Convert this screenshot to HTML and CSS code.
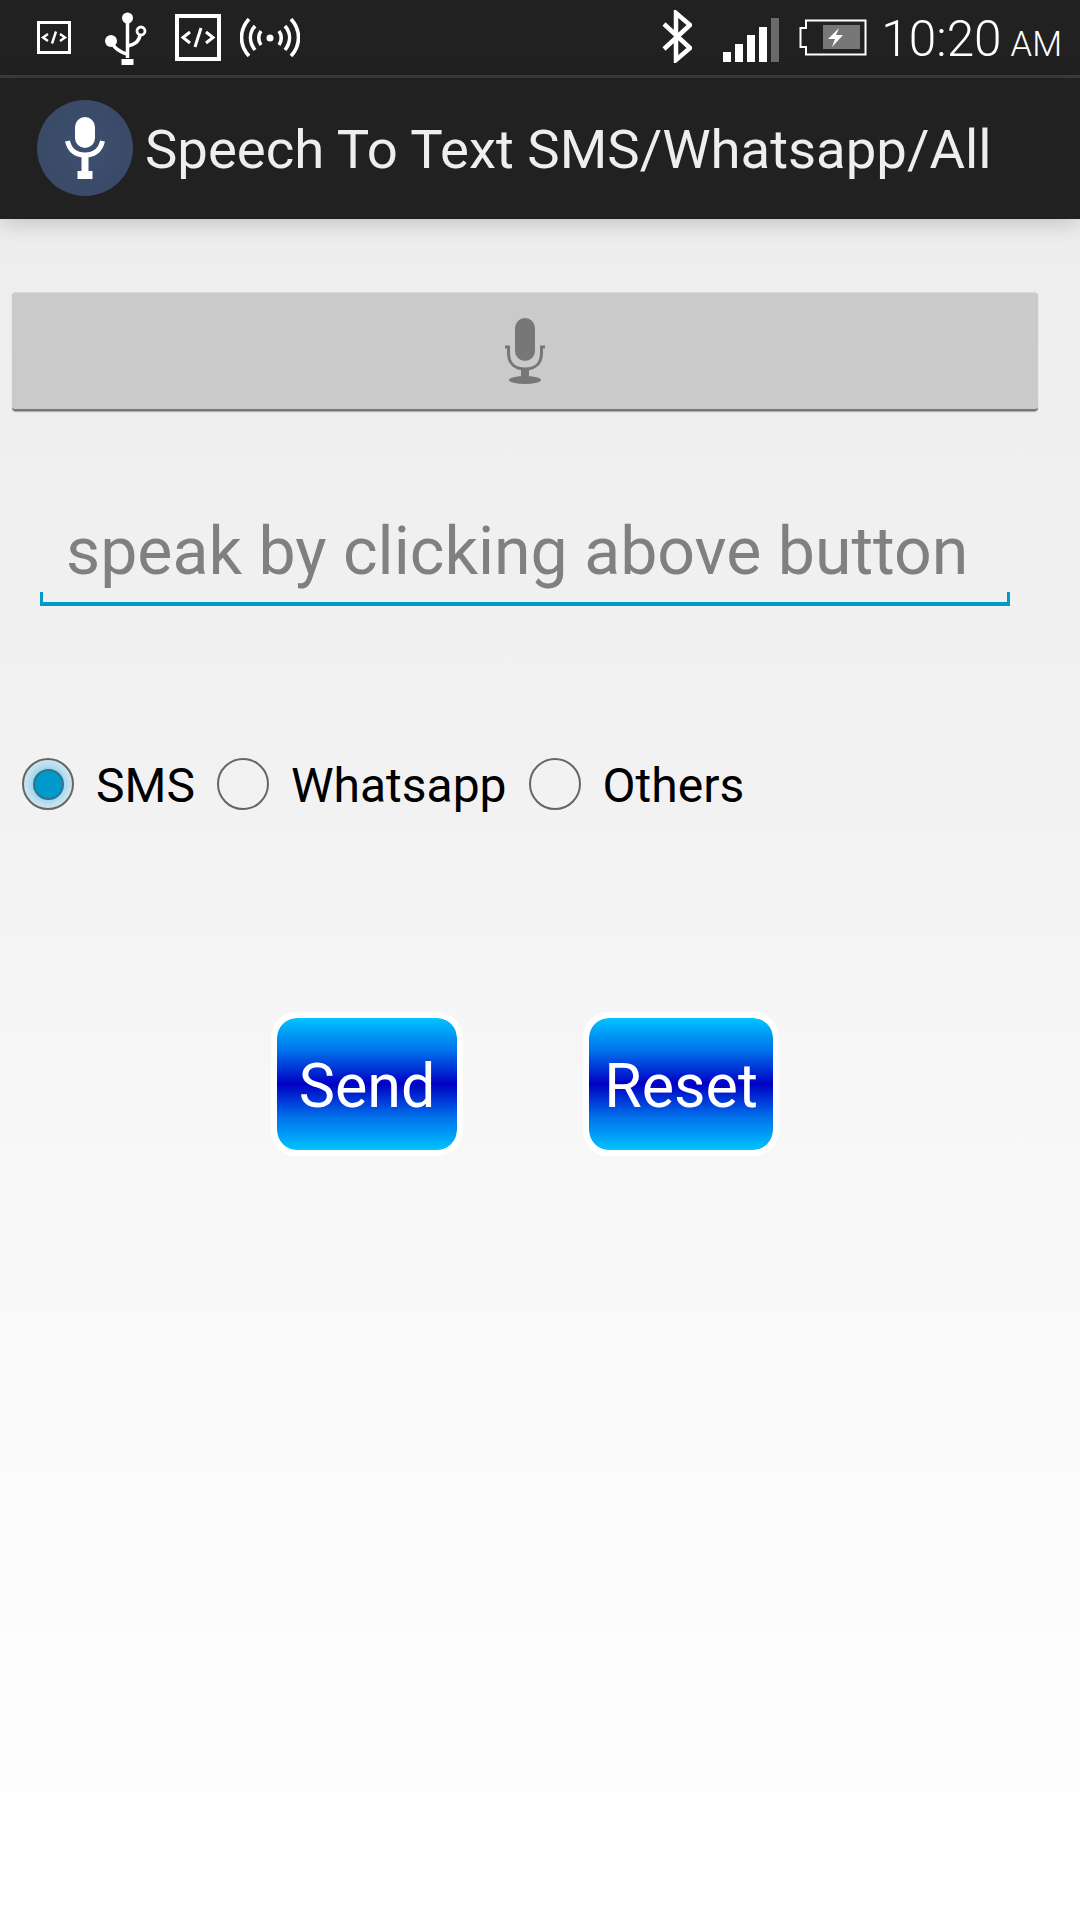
FILE: index.html
```html
<!DOCTYPE html>
<html lang="en">
<head>
<meta charset="utf-8">
<title>Speech To Text</title>
<link rel="stylesheet" href="styles.css">
</head>
<body>
<header class="status-bar">
  <div class="status-left">
    <svg class="ic-dev-small" width="34" height="33" viewBox="0 0 34 33">
      <rect x="1.500" y="1.500" width="31" height="30" fill="none" stroke="#fff" stroke-width="3"/>
      <path d="M11 13l-5 3.500 5 3.500M23 13l5 3.500-5 3.500M19 10.500l-4 12" fill="none" stroke="#fff" stroke-width="2.400"/>
    </svg>
    <svg class="ic-usb" width="42" height="54" viewBox="0 0 42 54">
      <circle cx="22.500" cy="6" r="5.500" fill="#fff"/>
      <path d="M22.500 8v38" stroke="#fff" stroke-width="3.500"/>
      <rect x="16.500" y="47" width="12" height="6" fill="#fff"/>
      <circle cx="6" cy="29" r="6" fill="#fff"/>
      <path d="M7 31c3 6 8 9 15 11" fill="none" stroke="#fff" stroke-width="3.500"/>
      <circle cx="36" cy="19" r="4" fill="none" stroke="#fff" stroke-width="2.800"/>
      <path d="M35 23c-1 7-5 9-12 11" fill="none" stroke="#fff" stroke-width="3.500"/>
    </svg>
    <svg class="ic-dev-large" width="46" height="47" viewBox="0 0 46 47">
      <rect x="2" y="2" width="42" height="43" fill="none" stroke="#fff" stroke-width="4"/>
      <path d="M15 18l-7 5.500 7 5.500M31 18l7 5.500-7 5.500M26 14l-6 19" fill="none" stroke="#fff" stroke-width="3"/>
    </svg>
    <svg class="ic-hotspot" width="60" height="40" viewBox="0 0 60 40">
      <circle cx="30" cy="20" r="3.500" fill="#fff"/>
      <g fill="none" stroke="#fff" stroke-width="3.600">
        <path d="M21 13C18 17 18 23 21 27M39 13C42 17 42 23 39 27"/>
        <path d="M15 8C9 15 9 24 15 32M45 8C51 15 51 24 45 32"/>
        <path d="M9 1C-1 12-1 27 9 38M51 1C61 12 61 27 51 38"/>
      </g>
    </svg>
  </div>
  <div class="status-right">
    <svg class="ic-bluetooth" width="30" height="53" viewBox="0 0 30 53">
      <path d="M2 14l26 24-14 12V3l14 12L2 39" fill="none" stroke="#fff" stroke-width="4.500"/>
    </svg>
    <svg class="ic-signal" width="56" height="44" viewBox="0 0 56 44">
      <rect x="0" y="34" width="8" height="10" fill="#fff"/>
      <rect x="12" y="26" width="8" height="18" fill="#fff"/>
      <rect x="24" y="17" width="8" height="27" fill="#fff"/>
      <rect x="36" y="9" width="8" height="35" fill="#fff"/>
      <rect x="48" y="0" width="8" height="44" fill="#6a6a6a"/>
    </svg>
    <svg class="ic-battery" width="68" height="37" viewBox="0 0 68 37">
      <path d="M7 9V1.500h59.500v34H7V28H1.500V9z" fill="none" stroke="#fff" stroke-width="2"/>
      <rect x="24" y="6" width="37" height="24" fill="#777"/>
      <path d="M40 9l-11 11h7l-3 8 11-12h-7l3-7z" fill="#fff"/>
    </svg>
    <div class="clock">10:20<span class="clock-suffix">AM</span></div>
  </div>
</header>
<div class="action-bar">
  <div class="app-icon">
    <svg width="40" height="62" viewBox="0 0 40 62">
      <rect x="10" y="0" width="20" height="31" rx="10" fill="#fff"/>
      <path d="M2.500 24c2 9 8 14 17.500 14s15.500-5 17.500-14" fill="none" stroke="#fff" stroke-width="5"/>
      <rect x="16.500" y="38" width="7" height="17" fill="#fff"/>
      <rect x="12.500" y="54" width="15" height="8" fill="#fff"/>
    </svg>
  </div>
  <h1 class="app-title">Speech To Text SMS/Whatsapp/All</h1>
</div>
<main class="content">
  <button class="mic-button" type="button" aria-label="Speak">
    <svg width="40" height="66" viewBox="0 0 40 66">
      <rect x="10" y="0" width="20" height="43" rx="10" fill="#777"/>
      <path d="M3.500 29v6c0 11 7 16 16.500 16s16.500-5 16.500-16v-6" fill="none" stroke="#777" stroke-width="3"/>
      <path d="M0 29h5M35 29h5" stroke="#777" stroke-width="3"/>
      <rect x="16" y="51" width="8" height="9" fill="#777"/>
      <ellipse cx="20" cy="62" rx="16" ry="4" fill="#777"/>
    </svg>
  </button>
  <div class="speech-field">speak by clicking above button</div>
  <div class="radio-group">
    <div class="radio radio-checked"><span class="radio-dot"></span></div>
    <span class="radio-label">SMS</span>
    <div class="radio"></div>
    <span class="radio-label">Whatsapp</span>
    <div class="radio"></div>
    <span class="radio-label">Others</span>
  </div>
  <div class="actions">
    <button class="action-button send" type="button">Send</button>
    <button class="action-button reset" type="button">Reset</button>
  </div>
</main>
</body>
</html>
```
FILE: styles.css
```css
* { box-sizing: border-box; }
html, body { margin: 0; padding: 0; }
body {
  width: 1080px;
  height: 1920px;
  overflow: hidden;
  font-family: Roboto, "Liberation Sans", sans-serif;
  background: linear-gradient(#e8e8e8 0, #eeeeee 280px, #f2f2f2 800px, #f7f7f7 1100px, #ffffff 1900px);
  display: flex;
  flex-direction: column;
}
.status-bar {
  height: 78px;
  flex: none;
  background: #212121;
  border-bottom: 3px solid #3d3d3d;
  display: flex;
  justify-content: space-between;
  padding: 0 18px 0 37px;
  color: #fff;
}
.status-left, .status-right { display: flex; align-items: flex-start; }
.ic-dev-small { margin-top: 21px; }
.ic-usb { margin: 12px 0 0 34px; }
.ic-dev-large { margin: 14px 0 0 28px; }
.ic-hotspot { margin: 18px 0 0 19px; }
.ic-bluetooth { margin-top: 10px; }
.ic-signal { margin: 18px 0 0 31px; }
.ic-battery { margin: 19px 0 0 20px; }
.clock {
  margin: 11px 0 0 14px;
  font-size: 49.500px;
  line-height: 57px;
  font-weight: 300;
  white-space: nowrap;
}
.clock-suffix { font-size: 34.500px; margin-left: 9px; font-weight: 300; }
.action-bar {
  height: 141px;
  flex: none;
  background: #212121;
  display: flex;
  align-items: center;
  padding: 0 0 2px 37px;
  box-shadow: 0 3px 22px rgba(0,0,0,.2);
  position: relative;
}
.app-icon {
  width: 96px;
  height: 96px;
  border-radius: 50%;
  background: radial-gradient(circle, #3d4f70 0, #3a4a68 70%, #2f3a50 100%);
  display: flex;
  align-items: center;
  justify-content: center;
  flex: none;
}
.app-title {
  margin: 2px 0 0 12px;
  font-size: 54.500px;
  font-weight: 400;
  color: #eeeeee;
  white-space: nowrap;
}
.content {
  flex: 1;
  display: flex;
  flex-direction: column;
  align-items: flex-start;
  padding-top: 73px;
}
.mic-button {
  margin-left: 12px;
  width: 1026px;
  height: 119px;
  background: #cacaca;
  border: 0;
  border-top: 1px solid #d8d8d8;
  border-bottom: 2px solid #777;
  border-radius: 4px;
  box-shadow: 0 1px 1px rgba(0,0,0,.3);
  display: flex;
  align-items: center;
  justify-content: center;
  padding: 0;
}
.speech-field {
  margin: 91px 0 0 40px;
  width: 970px;
  height: 104px;
  padding: 0 0 0 26px;
  font-size: 66.200px;
  line-height: 99px;
  color: #808080;
  white-space: nowrap;
  border-bottom: 4px solid #0099cc;
  position: relative;
}
.speech-field::before, .speech-field::after {
  content: "";
  position: absolute;
  bottom: 0;
  width: 3px;
  height: 10px;
  background: #0099cc;
}
.speech-field::before { left: 0; }
.speech-field::after { right: 0; }
.radio-group {
  margin: 152px 0 0 22px;
  display: flex;
  align-items: center;
  height: 52px;
}
.radio {
  width: 52px;
  height: 52px;
  border-radius: 50%;
  border: 2px solid #666;
  flex: none;
  display: flex;
  align-items: center;
  justify-content: center;
}
.radio-checked { background: radial-gradient(circle, #4fb2dc 0, #bfe0ee 60%, #e6f1f6 100%); }
.radio-dot {
  width: 31px;
  height: 31px;
  border-radius: 50%;
  background: #0099cc;
  border: 2px solid #2c7391;
}
.radio-label {
  margin: 2px 22px 0 22px;
  font-size: 48px;
  color: #000;
  white-space: nowrap;
}
.actions {
  margin: 202px 0 0 271px;
  display: flex;
  gap: 120px;
}
.action-button {
  height: 144px;
  padding: 4px 0 0;
  font-family: inherit;
  font-size: 61px;
  color: #fff;
  border: 6px solid #fff;
  border-radius: 26px;
  background: linear-gradient(#00c4ff 0, #0070ea 25%, #0000c4 50%, #0070ea 75%, #00c4ff 100%);
  background-origin: padding-box;
  background-clip: padding-box;
}
.send { width: 192px; }
.reset { width: 196px; }
```
